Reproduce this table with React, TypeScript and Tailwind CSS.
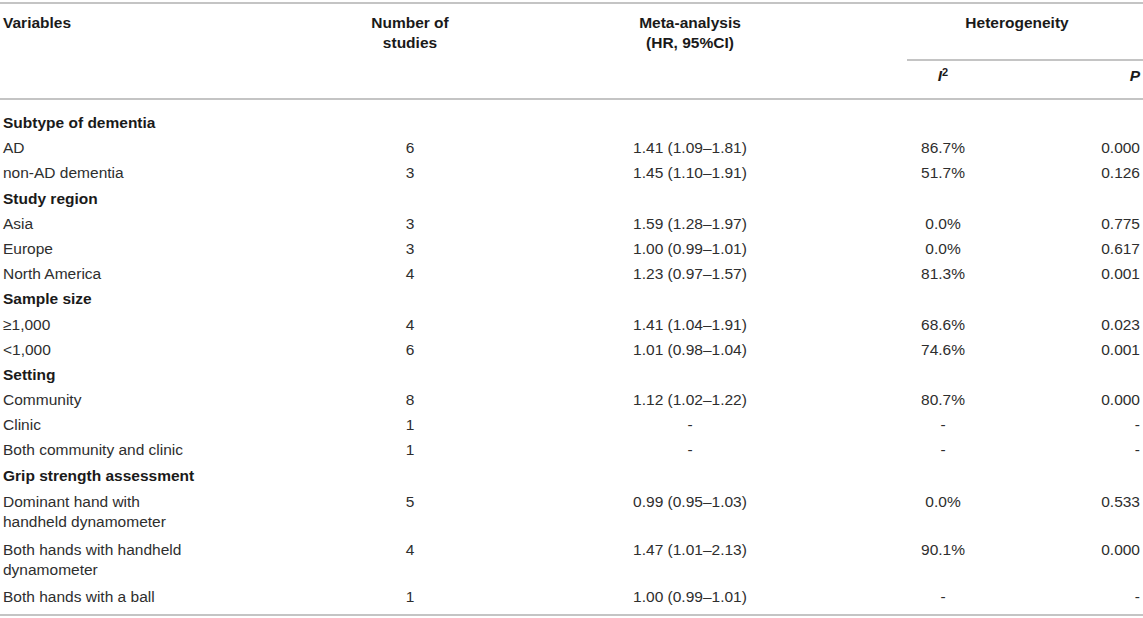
import React from 'react';

type Row = {
  label: React.ReactNode;
  n?: string;
  hr?: string;
  i2?: string;
  p?: string;
  group?: boolean;
  tall?: boolean;
};

const rows: Row[] = [
  { label: 'Subtype of dementia', group: true },
  { label: 'AD', n: '6', hr: '1.41 (1.09–1.81)', i2: '86.7%', p: '0.000' },
  { label: 'non-AD dementia', n: '3', hr: '1.45 (1.10–1.91)', i2: '51.7%', p: '0.126' },
  { label: 'Study region', group: true },
  { label: 'Asia', n: '3', hr: '1.59 (1.28–1.97)', i2: '0.0%', p: '0.775' },
  { label: 'Europe', n: '3', hr: '1.00 (0.99–1.01)', i2: '0.0%', p: '0.617' },
  { label: 'North America', n: '4', hr: '1.23 (0.97–1.57)', i2: '81.3%', p: '0.001' },
  { label: 'Sample size', group: true },
  { label: '≥1,000', n: '4', hr: '1.41 (1.04–1.91)', i2: '68.6%', p: '0.023' },
  { label: '<1,000', n: '6', hr: '1.01 (0.98–1.04)', i2: '74.6%', p: '0.001' },
  { label: 'Setting', group: true },
  { label: 'Community', n: '8', hr: '1.12 (1.02–1.22)', i2: '80.7%', p: '0.000' },
  { label: 'Clinic', n: '1', hr: '-', i2: '-', p: '-' },
  { label: 'Both community and clinic', n: '1', hr: '-', i2: '-', p: '-' },
  { label: 'Grip strength assessment', group: true },
  {
    label: (
      <>
        Dominant hand with
        <br />
        handheld dynamometer
      </>
    ),
    n: '5',
    hr: '0.99 (0.95–1.03)',
    i2: '0.0%',
    p: '0.533',
    tall: true,
  },
  {
    label: (
      <>
        Both hands with handheld
        <br />
        dynamometer
      </>
    ),
    n: '4',
    hr: '1.47 (1.01–2.13)',
    i2: '90.1%',
    p: '0.000',
    tall: true,
  },
  { label: 'Both hands with a ball', n: '1', hr: '1.00 (0.99–1.01)', i2: '-', p: '-' },
];

export default function App() {
  return (
    <div className="bg-white w-[1143px] h-[618px] pt-[2px] font-['Liberation_Sans',Arial,sans-serif] text-[15.5px] leading-[20px] text-[#2e2e2e]">
      <table className="w-[1143px] table-fixed border-collapse border-t-2 border-b-2 border-[#c4c4c4]">
        <colgroup>
          <col className="w-[300px]" />
          <col className="w-[220px]" />
          <col className="w-[340px]" />
          <col className="w-[166px]" />
          <col className="w-[117px]" />
        </colgroup>
        <thead className="text-[#1a1a1a] font-bold">
          <tr>
            <th rowSpan={2} className="align-top text-left pl-[3px] pt-[9px] font-bold border-b-2 border-[#c4c4c4]">
              Variables
            </th>
            <th rowSpan={2} className="align-top text-center pt-[9px] font-bold border-b-2 border-[#c4c4c4]">
              Number of
              <br />
              studies
            </th>
            <th rowSpan={2} className="align-top text-center pt-[9px] font-bold border-b-2 border-[#c4c4c4]">
              Meta-analysis
              <br />
              (HR, 95%CI)
            </th>
            <th colSpan={2} className="p-0 pl-[47px] align-top font-bold">
              <div className="h-[57px] pt-[9px] pr-[16px] text-center border-b-2 border-[#c4c4c4]">Heterogeneity</div>
            </th>
          </tr>
          <tr>
            <th className="text-center pt-[5px] pb-[12px] font-bold border-b-2 border-[#c4c4c4]">
              <i>I</i>
              <sup className="text-[11px] not-italic">2</sup>
            </th>
            <th className="text-right pr-[3px] pt-[5px] pb-[12px] font-bold border-b-2 border-[#c4c4c4]">
              <i>P</i>
            </th>
          </tr>
        </thead>
        <tbody>
          {rows.map((r, i) => {
            const first = i === 0;
            const last = i === rows.length - 1;
            const pad = first
              ? 'pt-[13px] pb-[2.6px]'
              : last
                ? 'pt-[2.6px] pb-[7px]'
                : r.tall
                  ? 'py-[4px]'
                  : 'py-[2.6px]';
            if (r.group) {
              return (
                <tr key={i}>
                  <td colSpan={5} className={`${pad} pl-[3px] font-bold text-[#1a1a1a]`}>
                    {r.label}
                  </td>
                </tr>
              );
            }
            return (
              <tr key={i} className="align-top">
                <td className={`${pad} pl-[3px]`}>{r.label}</td>
                <td className={`${pad} text-center`}>{r.n}</td>
                <td className={`${pad} text-center`}>{r.hr}</td>
                <td className={`${pad} text-center`}>{r.i2}</td>
                <td className={`${pad} text-right pr-[3px]`}>{r.p}</td>
              </tr>
            );
          })}
        </tbody>
      </table>
    </div>
  );
}
